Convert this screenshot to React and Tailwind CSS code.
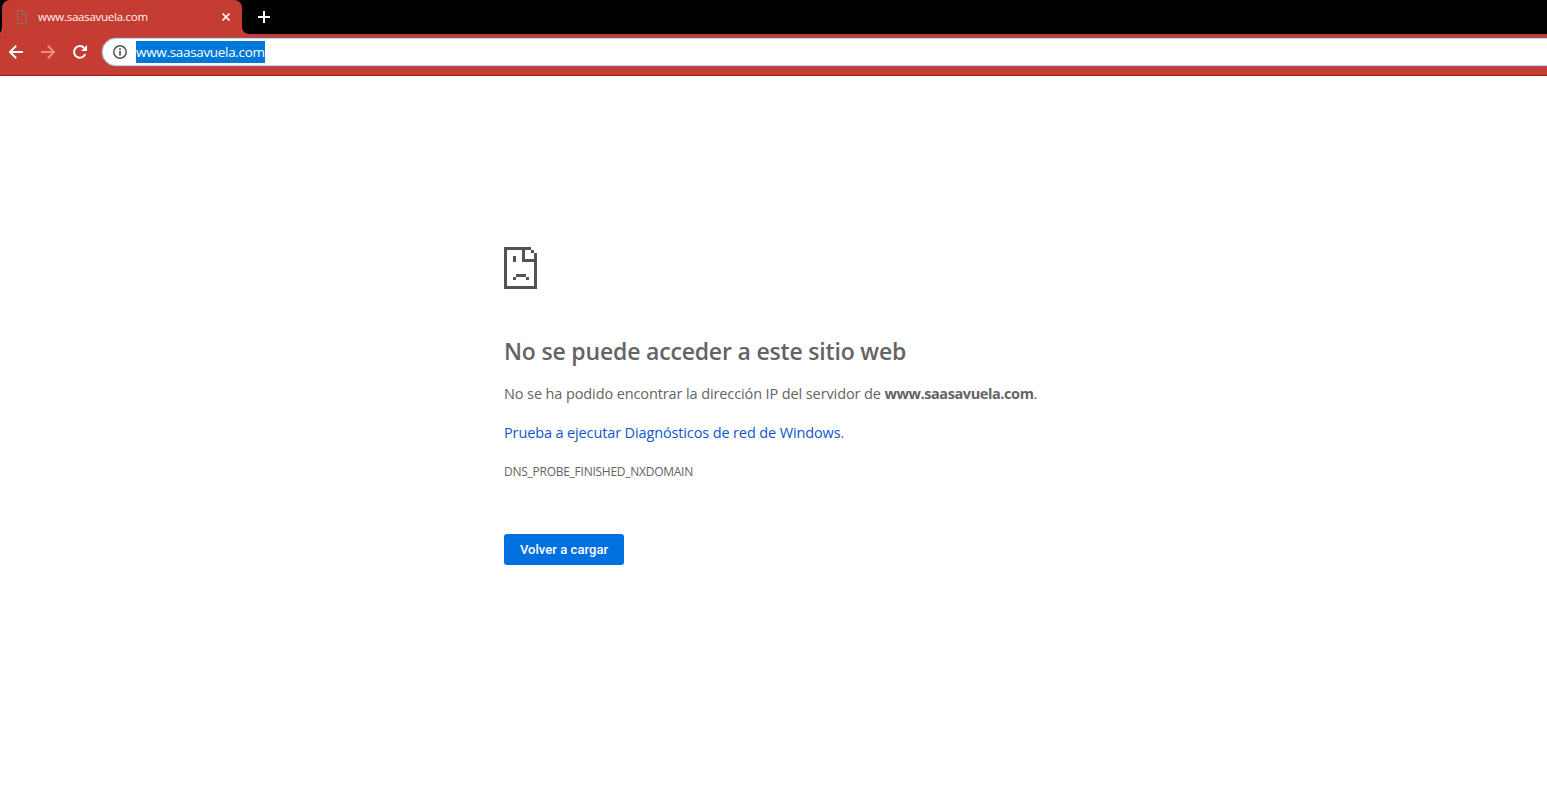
import React from "react";

const FileIcon = () => (
  <svg width="10" height="14" viewBox="0 0 10 14" fill="none" stroke="#8c7068">
    <path d="M.5 .5H6.2L9.5 3.8V13.5H.5ZM5.5 .5V4.5H9.5" />
  </svg>
);

const SadFile = () => (
  <svg width="33" height="42" viewBox="0 0 33 42" fill="#535353" shapeRendering="crispEdges">
    <path d="M0 0H27V3H21V12H33V42H0ZM3 3V39H30V15H18V3Z" fillRule="evenodd" />
    <path d="M27 3h3v3h-3zM30 6h3v9h-3zM9 9h3v6H9zM12 27h10v3H12zM9 30h3v3H9zM22 30h3v3h-3z" />
  </svg>
);

const TabStrip = () => (
  <div className="flex h-[34px] bg-black pl-[2px]">
    <div className="relative flex h-full w-[240px] items-center rounded-t-lg bg-[#c53c32] pl-[15px] pr-[12px] text-[#fff5f2]">
      <FileIcon />
      <span className="ml-[11px] text-[11.5px] tracking-[-0.26px] whitespace-nowrap">www.saasavuela.com</span>
      <svg className="ml-auto" width="8" height="8" viewBox="0 0 8 8" stroke="currentColor" strokeWidth="1.6">
        <path d="M.5 .5L7.5 7.5M7.5 .5L.5 7.5" />
      </svg>
      <svg className="absolute bottom-0 left-full" width="8" height="8" viewBox="0 0 8 8" fill="#c53c32">
        <path d="M0 0Q0 8 8 8H0Z" />
      </svg>
      <svg className="absolute right-full bottom-0" width="2" height="8" viewBox="0 0 2 8" fill="#c53c32">
        <path d="M2 0Q2 5 0 7V8H2Z" />
      </svg>
    </div>
    <svg className="mt-[11px] ml-[16px]" width="12" height="12" viewBox="0 0 12 12" stroke="#fff" strokeWidth="2">
      <path d="M6 0V12M0 6H12" />
    </svg>
  </div>
);

const Toolbar = () => (
  <div className="flex h-[42px] items-start border-b border-[#9b211b] bg-[#c53c32] pt-[3px] pl-[8px]">
    <svg className="mt-[7px]" width="16" height="16" viewBox="0 0 16 16" fill="none" stroke="#fff" strokeWidth="2">
      <path d="M15 8H2.5M8.2 1.8L2 8L8.2 14.2" />
    </svg>
    <svg className="mt-[7px] ml-[16px]" width="16" height="16" viewBox="0 0 16 16" fill="none" stroke="#ef8b7f" strokeWidth="2">
      <path d="M1 8H13.5M7.8 1.8L14 8L7.8 14.2" />
    </svg>
    <svg className="mt-[7px] ml-[16px]" width="16" height="16" viewBox="0 0 16 16" fill="none" stroke="#fff" strokeWidth="2">
      <path d="M13.2 10.2A5.8 5.8 0 1 1 12.2 4" />
      <path d="M15 1V7H9Z" fill="#fff" stroke="none" />
    </svg>
    <div className="-mr-[2px] ml-[13px] flex h-[30px] flex-1 items-center rounded-l-full border border-[#a9526a] bg-white pl-[11px] shadow-[inset_0_0_0_1px_#b9d8ee]">
      <svg width="14" height="14" viewBox="0 0 14 14" fill="none" stroke="#555" strokeWidth="1.5">
        <circle cx="7" cy="7" r="6.2" />
        <path d="M7 6V10.5M7 3.3V4.9" strokeWidth="1.7" />
      </svg>
      <span className="ml-[9px] flex h-[22px] w-[129px] items-center bg-[#0078d7] text-[13.5px] tracking-[-0.32px] whitespace-nowrap text-white">
        www.saasavuela.com
      </span>
    </div>
  </div>
);

const App = () => {
  return (
    <div className="h-[791px] w-[1547px] overflow-hidden bg-white font-['Open_Sans','Noto_Sans',sans-serif]">
      <TabStrip />
      <Toolbar />
      <main className="ml-[504px] flex flex-col items-start pt-[171px] text-[#646464]">
        <SadFile />
        <h1 className="mt-[47px] text-[23px] leading-[30px] font-semibold tracking-[-0.18px] whitespace-nowrap">
          No se puede acceder a este sitio web
        </h1>
        <p className="mt-[16px] text-[14.5px] leading-[24px] tracking-[-0.11px] whitespace-nowrap">
          No se ha podido encontrar la dirección IP del servidor de{" "}
          <strong className="font-bold tracking-[-0.41px]">www.saasavuela.com</strong>.
        </p>
        <p className="mt-[15px] text-[14.5px] leading-[24px] tracking-[-0.13px] whitespace-nowrap">
          <a className="text-[#1155cc]">Prueba a ejecutar Diagnósticos de red de Windows</a>.
        </p>
        <p className="mt-[18px] text-[12px] leading-[18px] tracking-[-0.26px] whitespace-nowrap">
          DNS_PROBE_FINISHED_NXDOMAIN
        </p>
        <button className="mt-[53px] h-[31px] w-[120px] rounded-[3px] bg-[#0070e0] font-[Roboto,sans-serif] text-[13px] font-medium tracking-[0.05px] whitespace-nowrap text-white">
          Volver a cargar
        </button>
      </main>
    </div>
  );
};

export default App;
